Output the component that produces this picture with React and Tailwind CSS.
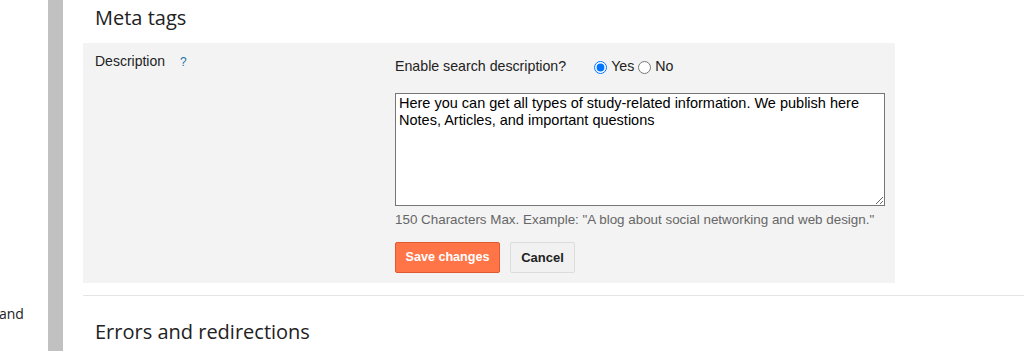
import React from "react";

export default function App() {
  return (
    <div className="flex w-[1024px] h-[351px] overflow-hidden bg-white text-[#222]">
      <div className="w-[48px] shrink-0 pt-[303px] font-['Open_Sans',sans-serif] text-[14px] text-[#222]">
        <span className="-ml-[1px]">and</span>
      </div>
      <div className="w-[15px] shrink-0 bg-[#c1c1c1]"></div>
      <div className="flex-1 pl-[20px]">
        <div className="h-[43px] pl-[12px] pt-[4px] font-['Open_Sans',sans-serif] text-[20px] leading-[28px] text-[#222]">
          Meta tags
        </div>
        <div className="flex w-[812px] h-[240px] bg-[#f3f3f3] font-['Liberation_Sans',Arial,sans-serif]">
          <div className="w-[312px] shrink-0 pl-[12px] pt-[10px] text-[14px] leading-[16px] text-[#222]">
            Description
            <span className="ml-[15px] text-[12px] text-[#1a73a8]">?</span>
          </div>
          <div className="flex flex-col pt-[14px]">
            <div className="flex items-center h-[20px] text-[14.2px] text-[#222]">
              <span>Enable search description?</span>
              <label className="ml-[28px] flex items-center">
                <input type="radio" name="en" defaultChecked className="m-0 w-[13px] h-[13px]" />
                <span className="ml-[4px]">Yes</span>
              </label>
              <label className="ml-[4px] flex items-center">
                <input type="radio" name="en" className="m-0 w-[13px] h-[13px]" />
                <span className="ml-[4px]">No</span>
              </label>
            </div>
            <textarea
              className="mt-[16px] w-[490px] h-[113px] border border-[#767676] bg-white px-[3px] py-[1px] text-[14.5px] leading-[17px] text-black font-['Liberation_Sans',Arial,sans-serif] outline-none resize-y"
              defaultValue="Here you can get all types of study-related information. We publish here Notes, Articles, and important questions"
            />
            <div className="mt-[6px] text-[13.4px] leading-[16px] text-[#666]">
              150 Characters Max. Example: "A blog about social networking and web design."
            </div>
            <div className="mt-[14px] flex gap-[10px]">
              <button className="w-[105px] h-[31px] rounded-[2px] border border-[#e1592f] bg-[#ff7548] text-white text-[12.6px] font-bold">
                Save changes
              </button>
              <button className="w-[65px] h-[31px] rounded-[2px] border border-[#dcdcdc] bg-[#f1f1f1] text-[#222] text-[13px] font-bold">
                Cancel
              </button>
            </div>
          </div>
        </div>
        <div className="mt-[12px] border-t border-[#e5e5e5] pl-[12px] pt-[22px] font-['Open_Sans',sans-serif] text-[20px] leading-[28px] text-[#222]">
          Errors and redirections
        </div>
      </div>
    </div>
  );
}
